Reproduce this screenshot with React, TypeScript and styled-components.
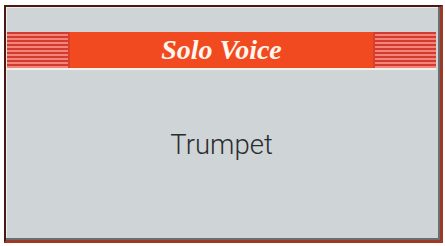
import { createGlobalStyle, styled } from "styled-components";

const GlobalStyle = createGlobalStyle`
  html, body {
    margin: 0;
    padding: 0;
    background: #ffffff;
  }
`;

const Frame = styled.div`
  box-sizing: border-box;
  margin: 5px 0 0 4px;
  width: 439px;
  height: 238px;
  border-top: 2px solid #4e1812;
  border-left: 2px solid #4e1812;
  border-right: 3px solid #9c3a26;
  border-bottom: 3px solid #9c3a26;
  background: #cfd4d6;
  box-shadow: inset -2px -2px 0 #6b6e70, inset 1px 1px 0 #e9ecec;
  display: flex;
  flex-direction: column;
  padding: 25px 4px 3px 1px;
`;

const Banner = styled.div`
  display: flex;
  height: 36px;
  background: #f24a20;
  border-bottom: 2px solid #f6f2ea;
`;

const Stripes = styled.div<{ side: "left" | "right" }>`
  width: 63px;
  flex: none;
  background: repeating-linear-gradient(
    to bottom,
    #d23c30 0px,
    #d23c30 2px,
    #f2847a 2px,
    #f2847a 4px
  );
  box-shadow: ${(p) =>
    p.side === "left" ? "inset -2px 0 0 #d8402c" : "inset 2px 0 0 #d8402c"};
`;

const Title = styled.div`
  flex: 1;
  display: flex;
  align-items: center;
  justify-content: center;
  font-family: "Liberation Serif", "Times New Roman", serif;
  font-style: italic;
  font-weight: bold;
  font-size: 28px;
  color: #fff6ee;
  padding-bottom: 1px;
`;

const Body = styled.div`
  flex: 1;
  display: flex;
  align-items: center;
  justify-content: center;
  padding-bottom: 18px;
`;

const Voice = styled.span`
  font-family: Roboto, "Liberation Sans", sans-serif;
  font-weight: 300;
  font-size: 27.5px;
  color: #2a2d30;
`;

export default function App() {
  return (
    <>
      <GlobalStyle />
      <Frame>
        <Banner>
          <Stripes side="left" />
          <Title>Solo Voice</Title>
          <Stripes side="right" />
        </Banner>
        <Body>
          <Voice>Trumpet</Voice>
        </Body>
      </Frame>
    </>
  );
}
